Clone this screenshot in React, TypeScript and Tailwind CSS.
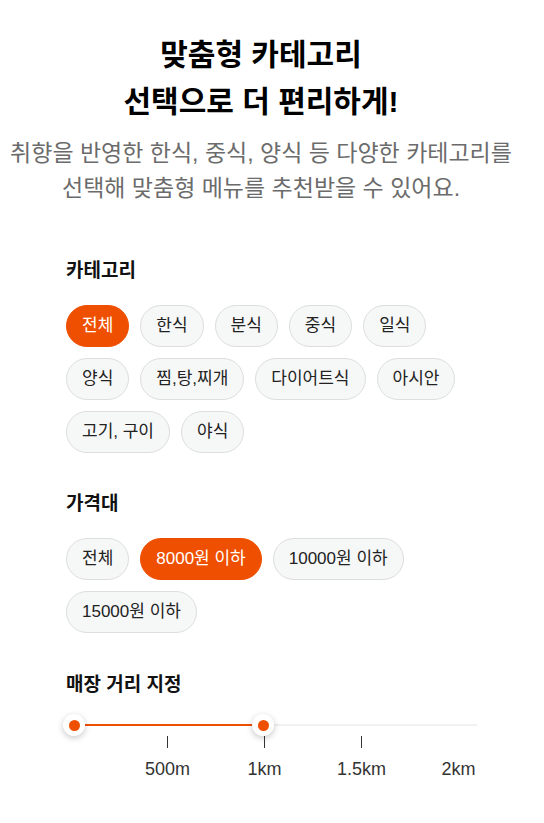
import { useState } from "react";

const CATEGORIES = ["전체", "한식", "분식", "중식", "일식", "양식", "찜,탕,찌개", "다이어트식", "아시안", "고기, 구이", "야식"];
const PRICES = ["전체", "8000원 이하", "10000원 이하", "15000원 이하"];
const DISTANCES = ["500m", "1km", "1.5km", "2km"];

const FONT = { fontFamily: '"Liberation Sans", "Noto Sans CJK KR", sans-serif' };

function Chip({ label, active, onClick }: { label: string; active: boolean; onClick: () => void }) {
  return (
    <button
      onClick={onClick}
      className={
        active
          ? "h-[42px] rounded-full border border-[#ef4f00] bg-[#ef4f00] px-[15px] text-[17px] text-white"
          : "h-[42px] rounded-full border border-[#dedede] bg-[#f6f7f7] px-[15px] text-[17px] text-[#222]"
      }
    >
      {label}
    </button>
  );
}

function Thumb() {
  return (
    <div className="flex h-[22px] w-[22px] shrink-0 items-center justify-center rounded-full bg-white shadow-[0_2px_6px_rgba(0,0,0,0.22)]">
      <div className="h-[11px] w-[11px] rounded-full bg-[#ef4f00]" />
    </div>
  );
}

export default function App() {
  const [category, setCategory] = useState("전체");
  const [price, setPrice] = useState("8000원 이하");

  return (
    <div className="min-h-[823px] w-[544px] bg-white pt-[31px]" style={FONT}>
      <div className="w-[522px]">
        <h1 className="text-center text-[30px] font-bold leading-[47px] text-black">
          맞춤형 카테고리
          <br />
          선택으로 더 편리하게!
        </h1>
        <p className="mt-[11px] whitespace-nowrap text-center text-[23px] leading-[35px] text-[#6b6b6b]">
          취향을 반영한 한식, 중식, 양식 등 다양한 카테고리를
          <br />
          선택해 맞춤형 메뉴를 추천받을 수 있어요.
        </p>
      </div>

      <div className="px-[66px]">
        <h2 className="mt-[53px] text-[19px] font-bold leading-[24px] text-[#111]">카테고리</h2>
        <div className="mt-[22px] flex flex-wrap gap-x-[11px] gap-y-[11px]">
          {CATEGORIES.map((c) => (
            <Chip key={c} label={c} active={c === category} onClick={() => setCategory(c)} />
          ))}
        </div>

        <h2 className="mt-[39px] text-[19px] font-bold leading-[24px] text-[#111]">가격대</h2>
        <div className="mt-[22px] flex flex-wrap gap-x-[11px] gap-y-[11px]">
          {PRICES.map((p) => (
            <Chip key={p} label={p} active={p === price} onClick={() => setPrice(p)} />
          ))}
        </div>

        <h2 className="mt-[40px] text-[19px] font-bold leading-[24px] text-[#111]">매장 거리 지정</h2>

        <div className="mt-[17px] w-[411px]">
          <div className="flex h-[22px] items-center">
            <div className="relative flex h-[2px] flex-1 items-center bg-[#f1f1f1]">
              <div className="absolute left-[8px] h-[2px] w-[189px] bg-[#ef4f00]" />
              <div className="absolute left-[-3px] flex w-[211px] justify-between">
                <Thumb />
                <Thumb />
              </div>
            </div>
          </div>
          <div className="grid w-[441px] grid-cols-4 pl-[53px]">
            {DISTANCES.map((d, i) => (
              <div key={d} className="flex flex-col items-center">
                <div className={i < 3 ? "h-[12px] w-[1.5px] bg-[#333]" : "h-[12px]"} />
                <span className="mt-[10px] text-[18px] leading-[22px] text-[#333]">{d}</span>
              </div>
            ))}
          </div>
        </div>
      </div>
    </div>
  );
}
